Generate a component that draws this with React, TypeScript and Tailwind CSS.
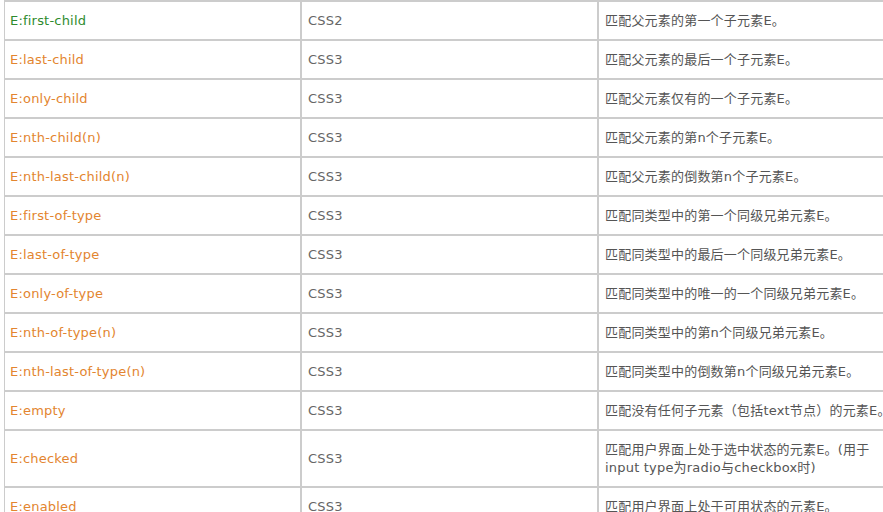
const rows: { sel: string; ver: string; desc: React.ReactNode; first?: boolean }[] = [
  { sel: "E:first-child", ver: "CSS2", desc: "匹配父元素的第一个子元素E。", first: true },
  { sel: "E:last-child", ver: "CSS3", desc: "匹配父元素的最后一个子元素E。" },
  { sel: "E:only-child", ver: "CSS3", desc: "匹配父元素仅有的一个子元素E。" },
  { sel: "E:nth-child(n)", ver: "CSS3", desc: "匹配父元素的第n个子元素E。" },
  { sel: "E:nth-last-child(n)", ver: "CSS3", desc: "匹配父元素的倒数第n个子元素E。" },
  { sel: "E:first-of-type", ver: "CSS3", desc: "匹配同类型中的第一个同级兄弟元素E。" },
  { sel: "E:last-of-type", ver: "CSS3", desc: "匹配同类型中的最后一个同级兄弟元素E。" },
  { sel: "E:only-of-type", ver: "CSS3", desc: "匹配同类型中的唯一的一个同级兄弟元素E。" },
  { sel: "E:nth-of-type(n)", ver: "CSS3", desc: "匹配同类型中的第n个同级兄弟元素E。" },
  { sel: "E:nth-last-of-type(n)", ver: "CSS3", desc: "匹配同类型中的倒数第n个同级兄弟元素E。" },
  { sel: "E:empty", ver: "CSS3", desc: "匹配没有任何子元素（包括text节点）的元素E。" },
  {
    sel: "E:checked",
    ver: "CSS3",
    desc: (
      <>
        匹配用户界面上处于选中状态的元素E。(用于
        <br />
        input type为radio与checkbox时)
      </>
    ),
  },
  { sel: "E:enabled", ver: "CSS3", desc: "匹配用户界面上处于可用状态的元素E。" },
];

export default function App() {
  return (
    <div className="w-[883px] h-[512px] overflow-hidden bg-white pl-[4px] font-['DejaVu_Sans','Noto_Sans_CJK_SC',sans-serif] text-[13px] tracking-[0.2px]">
      <div className="border-t border-[#cccccc] w-[891px]">
        <table className="border-separate border-spacing-0 table-fixed w-[891px]">
          <tbody>
            {rows.map((r) => (
              <tr key={r.sel}>
                <td
                  className={`w-[297px] border border-[#cccccc] pl-[5px] pr-[5px] pt-[10px] pb-[9px] leading-[18px] align-middle ${
                    r.first ? "text-[#2e8b2e]" : "text-[#e3852f]"
                  }`}
                >
                  {r.sel}
                </td>
                <td className="w-[297px] border border-[#cccccc] pl-[6px] pr-[6px] pt-[10px] pb-[9px] leading-[18px] align-middle text-[#666666]">
                  {r.ver}
                </td>
                <td className="w-[297px] border border-[#cccccc] pl-[6px] pr-[2px] pt-[10px] pb-[9px] leading-[18px] align-middle text-[#555555] whitespace-nowrap">
                  {r.desc}
                </td>
              </tr>
            ))}
          </tbody>
        </table>
      </div>
    </div>
  );
}
